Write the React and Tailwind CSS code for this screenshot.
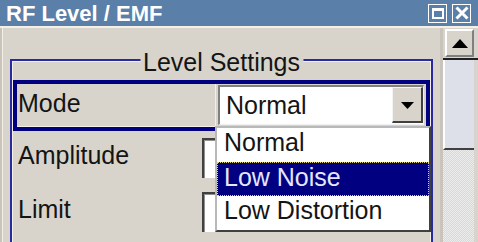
import React from 'react';

const items = ['Normal', 'Low Noise', 'Low Distortion'];

function Field({ label }) {
    return (
        <div className="flex h-[54px] pl-[5px] pr-[8px]">
            <div className="w-[184px] leading-[28px] pt-[10px]">{label}</div>
            <div className="flex-1 h-[40px] mt-[7px] bg-white border-t-2 border-l-2 border-[#404040] shadow-[inset_1px_1px_0_#909090]" />
        </div>
    );
}

export default function App() {
    return (
        <div className="w-[478px] h-[242px] overflow-hidden bg-[#d8d4cc] flex flex-col font-['Liberation_Sans',Arial,sans-serif] text-[25px] text-[#141414]">
            {/* title bar */}
            <div className="h-[26px] shrink-0 bg-[#5a7fa8] flex items-center pl-[6px] pr-[7px]">
                <span className="flex-1 text-white font-bold text-[22px] leading-[26px] pt-[1px]">RF Level / EMF</span>
                <div className="flex gap-[5px]">
                    <div className="w-[19px] h-[19px] border border-white flex items-center justify-center">
                        <div className="w-[12px] h-[11px] border-2 border-white border-t-[3px]" />
                    </div>
                    <div className="w-[19px] h-[19px] border border-white flex items-center justify-center">
                        <svg width="14" height="14" viewBox="0 0 14 14">
                            <path d="M1.5 1.5 L12.5 12.5 M12.5 1.5 L1.5 12.5" stroke="white" strokeWidth="3" />
                        </svg>
                    </div>
                </div>
            </div>
            <div className="h-[2px] shrink-0 bg-[#f4f0e6]" />

            <div className="flex flex-1 min-h-0">
                {/* content */}
                <div className="flex-1 pl-[10px] pr-[7px] pt-[31px] shadow-[inset_2px_0_0_#c8c4bc,inset_3px_0_0_#f4f0e6]">
                    <div className="relative h-[260px] border-t-2 border-x-2 border-[#2a2aa0]">
                        <div className="absolute left-1/2 -translate-x-1/2 top-[-13px] px-[3px] bg-[#d8d4cc] leading-[28px] whitespace-nowrap">
                            Level Settings
                        </div>
                        <div className="h-full border-t border-x border-[#f4f0e6] pt-[18px]">
                            {/* Mode row (selected) */}
                            <div className="h-[51px] border-4 border-[#000080] flex">
                                <div className="w-[199px] border-r border-b border-[#f4f0e6] pl-[1px] pt-[5px] leading-[28px]">Mode</div>
                                <div className="ml-[2px] mt-[1px] w-[206px] h-[40px] bg-white border-t-2 border-l-2 border-[#808080] border-r border-b border-r-[#f0f0f0] border-b-[#f0f0f0] flex">
                                    <span className="flex-1 pl-[6px] pt-[4px] leading-[28px]">Normal</span>
                                    <div className="w-[31px] h-[36px] bg-[#d8d4cc] border-t border-l border-[#f4f4f4] border-r-2 border-b-2 border-r-[#404040] border-b-[#404040] flex items-center justify-center">
                                        <svg width="13" height="7" viewBox="0 0 13 7" className="mt-[2px]">
                                            <path d="M0 0 H13 L6.5 7 Z" fill="#000" />
                                        </svg>
                                    </div>
                                </div>
                            </div>
                            <Field label="Amplitude" />
                            <Field label="Limit" />
                        </div>

                        {/* open dropdown list */}
                        <div className="absolute left-[203px] top-[65px] w-[216px] bg-white border-l-2 border-t-2 border-[#b8b8b8] border-r-2 border-b-2 border-r-[#404040] border-b-[#404040]">
                            {items.map((it, i) => (
                                <div
                                    key={it}
                                    className={i === 1
                                        ? 'h-[34px] leading-[28px] pl-[6px] bg-[#000080] text-[#e6e6ff] border border-dotted border-[#e8d870]'
                                        : 'h-[34px] leading-[28px] pl-[7px]'}
                                >
                                    {it}
                                </div>
                            ))}
                        </div>
                    </div>
                </div>

                {/* scrollbar */}
                <div className="w-[38px] flex flex-col border-l-[3px] border-[#c8c4bc] pr-[4px]">
                    <div className="h-[30px] pt-[1px] pl-[2px]">
                        <div className="h-[28px] border-t-2 border-l-2 border-white border-r-2 border-b-2 border-r-[#808080] border-b-[#808080] bg-[#d8d4cc] flex items-center justify-center">
                            <svg width="16" height="9" viewBox="0 0 16 9">
                                <path d="M8 0 L16 9 H0 Z" fill="#000" />
                            </svg>
                        </div>
                    </div>
                    <div className="h-[2px] bg-[#202020] -mr-[4px]" />
                    <div className="h-[90px] bg-[#dde0e8] border-l-2 border-white border-b-2 border-b-[#404040]" />
                    <div className="flex-1 bg-[repeating-conic-gradient(#ececec_0%_25%,#d8d8d8_0%_50%)] bg-[length:2px_2px]" />
                </div>
            </div>
        </div>
    );
}
